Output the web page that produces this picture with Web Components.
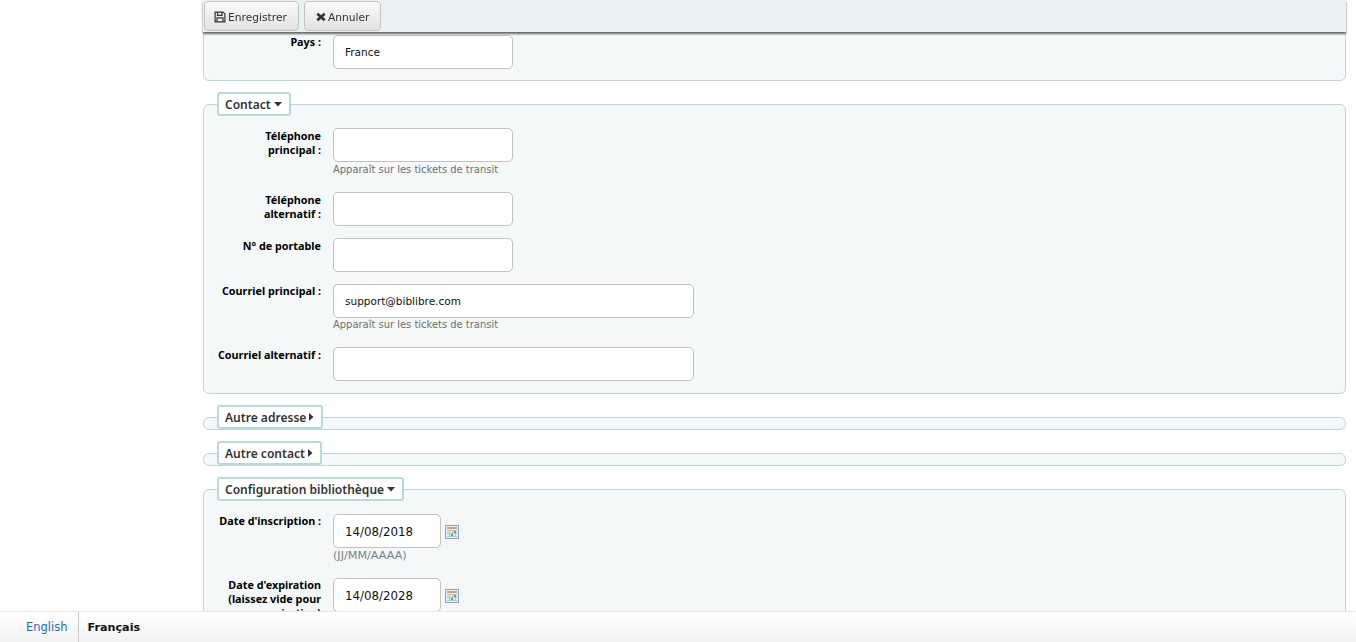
<!DOCTYPE html>
<html lang="fr">
<head>
<meta charset="utf-8">
<title>Modifier un adhérent</title>
<style>
  html, body { margin: 0; height: 100%; overflow: hidden; background: #fff; }
  body { font-family: "DejaVu Sans", sans-serif; font-size: 12px; color: #000; }
  k-page { padding: 0 10px 0 203px; }
</style>
</head>
<body>
<k-toolbar>
  <k-button icon="save">Enregistrer</k-button>
  <k-button icon="times">Annuler</k-button>
</k-toolbar>

<k-page>
  <k-fieldset style="margin-top:-20px;padding-top:54px">
    <k-row label="Pays :" style="--label-top:-1px;margin-bottom:11px"><k-input value="France"></k-input></k-row>
  </k-fieldset>

  <k-fieldset legend="Contact" open>
    <k-row label="Téléphone principal :" hint="Apparaît sur les tickets de transit"><k-input></k-input></k-row>
    <k-row label="Téléphone alternatif :"><k-input></k-input></k-row>
    <k-row label="N° de portable"><k-input></k-input></k-row>
    <k-row label="Courriel principal :" hint="Apparaît sur les tickets de transit" style="--hint-top:0px;--label-top:-1px"><k-input size="long" value="support@biblibre.com"></k-input></k-row>
    <k-row label="Courriel alternatif :"><k-input size="long"></k-input></k-row>
  </k-fieldset>

  <k-fieldset legend="Autre adresse"></k-fieldset>
  <k-fieldset legend="Autre contact"></k-fieldset>

  <k-fieldset legend="Configuration bibliothèque" open style="padding-top:24px">
    <k-row label="Date d'inscription :" hint="(JJ/MM/AAAA)" style="--label-top:-1px"><k-input size="date" value="14/08/2018"></k-input><k-calendar></k-calendar></k-row>
    <k-row label="Date d'expiration (laissez vide pour aucune expiration) :" style="--label-top:-1px"><k-input size="date" value="14/08/2028"></k-input><k-calendar></k-calendar></k-row>
  </k-fieldset>
</k-page>

<k-footer>
  <a href="#">English</a>
  <b>Français</b>
</k-footer>

<script>
const ICONS = {
  save: '<svg width="12" height="12" viewBox="0 0 12 12"><path fill="none" stroke="#333" stroke-width="1.2" d="M1.1 1.1h8l1.8 1.8v8h-9.800z"/><path fill="none" stroke="#333" stroke-width="1.200" d="M3.500 1.300v3h4.500v-3M3 10.800v-4h6v4"/></svg>',
  times: '<svg width="10" height="10" viewBox="0 0 10 10" style="margin-left:2px"><path fill="none" stroke="#333" stroke-width="2.800" d="M1.300 1.800l7.400 6.400M8.700 1.800l-7.400 6.400"/></svg>'
};

class KToolbar extends HTMLElement {
  connectedCallback() {
    this.attachShadow({ mode: 'open' }).innerHTML = `
      <style>
        :host {
          position: fixed; top: 0; left: 203px; right: 10px; z-index: 5;
          display: flex; gap: 5px; height: 32px; padding: 1px 1px 0; box-sizing: border-box;
          background: #e8f1f3; box-shadow: 0 2px 2px #666;
        }
      </style>
      <slot></slot>`;
  }
}

class KButton extends HTMLElement {
  connectedCallback() {
    const icon = ICONS[this.getAttribute('icon')] || '';
    this.attachShadow({ mode: 'open' }).innerHTML = `
      <style>
        :host {
          display: inline-flex; align-items: center; gap: 2px; height: 30px; padding: 2px 11px 0 9px;
          box-sizing: border-box; border: 1px solid #c3c3c3; border-radius: 4px;
          background: linear-gradient(#fafafa, #e2e2e2); color: #333; font-size: 10.700px;
        }
        svg { display: block; }
      </style>
      ${icon}<slot></slot>`;
  }
}

class KPage extends HTMLElement {
  connectedCallback() {
    this.attachShadow({ mode: 'open' }).innerHTML = `
      <style>:host { display: block; }</style><slot></slot>`;
  }
}

class KFieldset extends HTMLElement {
  connectedCallback() {
    const legend = this.getAttribute('legend');
    const open = this.hasAttribute('open');
    const caret = open
      ? '<svg width="8" height="5" viewBox="0 0 8 5"><path fill="#333" d="M0 0h8L4 4.500z"/></svg>'
      : '<svg width="5" height="8" viewBox="0 0 5 8"><path fill="#333" d="M0 0v8l4.500-4z"/></svg>';
    this.attachShadow({ mode: 'open' }).innerHTML = `
      <style>
        :host {
          display: block; position: relative; box-sizing: border-box;
          margin: 23px 0; min-height: 13px; padding: 23px 0 0;
          border: 1px solid #b9d8d9; border-radius: 6px; background: #f4f8f9;
        }
        .legend {
          position: absolute; left: 13px; top: -13px; display: flex; align-items: center; gap: 3px;
          height: 24px; padding: 0 7px 0 6px; box-sizing: border-box;
          border: 2px solid #b9d8d9; border-radius: 3px; background: #fff;
          color: #333; font: 600 12.050px "Noto Sans", sans-serif; white-space: nowrap;
        }
        :host(:not([legend])) .legend { display: none; }
        svg { display: block; }
      </style>
      <div class="legend">${legend || ''}${caret}</div>
      <slot></slot>`;
    if (legend && !open) { this.style.padding = '0'; }
  }
}

class KRow extends HTMLElement {
  connectedCallback() {
    const hint = this.getAttribute('hint');
    this.attachShadow({ mode: 'open' }).innerHTML = `
      <style>
        :host { display: grid; grid-template-columns: 105px auto; column-gap: 12px; margin-bottom: 12px; padding-left: 12px; }
        label { text-align: right; font: 700 10.800px/14px "Noto Sans", sans-serif; padding-top: 1px; margin-top: var(--label-top, 0px); }
        .field { display: flex; align-items: flex-start; gap: 4px; }
        .hint { grid-column: 2; margin-top: var(--hint-top, 1px); height: 17px; line-height: 14px; color: #6f6f6f; font-size: 9.950px; }
        .hint.date { font-size: 11.200px; color: #77808a; }
      </style>
      <label>${this.getAttribute('label')}</label>
      <div class="field"><slot></slot></div>
      ${hint ? `<div class="hint${hint[0] === '(' ? ' date' : ''}">${hint}</div>` : ''}`;
  }
}

class KInput extends HTMLElement {
  connectedCallback() {
    const size = this.getAttribute('size');
    const w = { long: 361, date: 108 }[size] || 180;
    this.attachShadow({ mode: 'open' }).innerHTML = `
      <style>
        :host {
          display: block; box-sizing: border-box; width: ${w}px; height: 34px; padding: ${size === 'date' ? 1 : 0}px 11px 0;
          border: 1px solid #c5c0b8; border-radius: 5px; background: #fff;
          font-size: ${size === 'date' ? 11.8 : 10.500}px; line-height: 32px; color: #111;
        }
      </style>${this.getAttribute('value') || ''}`;
  }
}

class KCalendar extends HTMLElement {
  connectedCallback() {
    this.attachShadow({ mode: 'open' }).innerHTML = `
      <style>:host { display: block; width: 14px; height: 14px; margin-top: 11px; } svg { display: block; }</style>
      <svg width="14" height="14" viewBox="0 0 14 14" shape-rendering="crispEdges">
        <rect x=".5" y=".5" width="13" height="13" fill="#e4edf6" stroke="#7ea6d8"/>
        <rect x="2" y="2" width="10" height="2" fill="#f09a52"/>
        <path stroke="#b7c2cc" d="M2 5.500h10M2 8.500h10M2 11.500h10M4.500 5v7M7.500 5v7M10.500 5v7"/>
        <rect x="6" y="9" width="2" height="2" fill="#5aa85a"/>
        <rect x="9" y="6" width="2" height="2" fill="#5aa85a"/>
      </svg>`;
  }
}

class KFooter extends HTMLElement {
  connectedCallback() {
    this.attachShadow({ mode: 'open' }).innerHTML = `
      <style>
        :host {
          position: fixed; left: 0; right: 0; bottom: 0; z-index: 5; height: 31px; box-sizing: border-box;
          display: flex; align-items: center; padding-left: 16px; font-size: 11.500px;
          border-top: 1px solid #e6e6e6; background: linear-gradient(#fff, #f3f3f3);
        }
        ::slotted(a) { color: #1a6eb5; text-decoration: none; padding: 0 10px; line-height: 30px; border-right: 1px solid #ccc; }
        ::slotted(b) { color: #111; padding: 0 9px; font-size: 11.200px; font-weight: 700; }
      </style>
      <slot></slot>`;
  }
}

customElements.define('k-toolbar', KToolbar);
customElements.define('k-button', KButton);
customElements.define('k-page', KPage);
customElements.define('k-fieldset', KFieldset);
customElements.define('k-row', KRow);
customElements.define('k-input', KInput);
customElements.define('k-calendar', KCalendar);
customElements.define('k-footer', KFooter);
</script>
</body>
</html>
